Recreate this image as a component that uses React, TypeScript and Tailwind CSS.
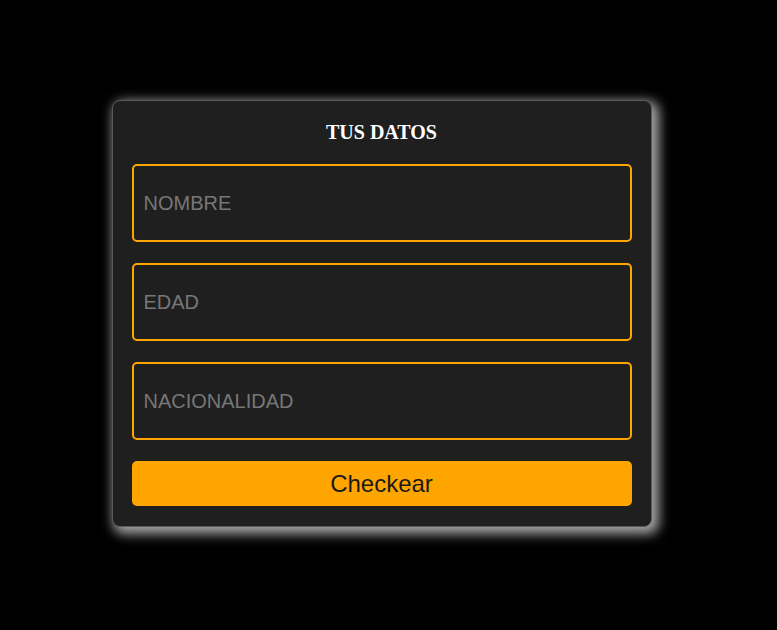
export default function App() {
  const fields = ['NOMBRE', 'EDAD', 'NACIONALIDAD'];

  return (
    <div className="w-full h-screen bg-black flex items-start justify-center pt-[100px] pr-[14px] font-['Liberation_Sans',Arial,sans-serif]">
      <form
        className="w-[540px] bg-[#1f1f1f] border border-[#5a5a5a] rounded-lg px-[19px] pt-[20px] pb-[20px] flex flex-col shadow-[4px_4px_12px_3px_rgba(220,220,220,0.75)]"
        onSubmit={(e) => e.preventDefault()}
      >
        <h2 className="text-center text-white font-bold text-[20px] leading-[22px] font-['Liberation_Serif','Times_New_Roman',serif]">
          TUS DATOS
        </h2>

        <div className="flex flex-col gap-[21px] mt-[21px]">
          {fields.map((f) => (
            <input
              key={f}
              placeholder={f}
              className="h-[78px] w-full bg-[#1f1f1f] border-2 border-[#ffa500] rounded-[5px] px-[10px] text-[20px] text-white placeholder:text-[#777777] outline-none"
            />
          ))}

          <button
            type="submit"
            className="h-[45px] w-full bg-[#ffa500] rounded-[5px] text-[24px] text-[#1a1a1a]"
          >
            Checkear
          </button>
        </div>
      </form>
    </div>
  );
}
